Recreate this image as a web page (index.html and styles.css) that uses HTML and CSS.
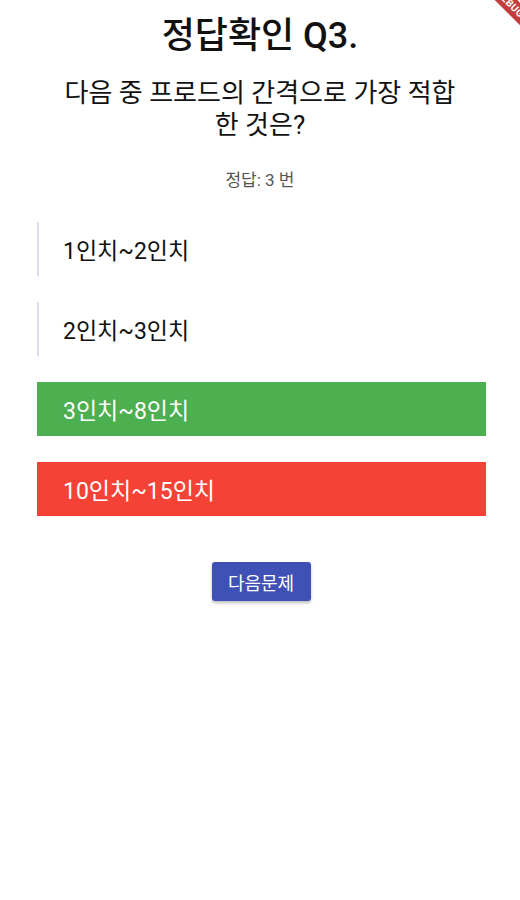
FILE: index.html
```html
<!DOCTYPE html>
<html lang="ko">
<head>
<meta charset="utf-8">
<title>정답확인</title>
<link rel="stylesheet" href="styles.css">
</head>
<body>
<div class="page">
  <h1 class="title">정답확인 Q3.</h1>
  <p class="question">다음 중 프로드의 간격으로 가장 적합<br>한 것은?</p>
  <p class="answer">정답: 3 번</p>
  <div class="options">
    <div class="option plain">1인치~2인치</div>
    <div class="option plain">2인치~3인치</div>
    <div class="option correct">3인치~8인치</div>
    <div class="option wrong">10인치~15인치</div>
  </div>
  <div class="actions">
    <button class="next">다음문제</button>
  </div>
  <div class="debug">DEBUG</div>
</div>
</body>
</html>
```

FILE: styles.css
```css
html, body {
  margin: 0;
  padding: 0;
  background: #fff;
  overflow: hidden;
}
body {
  font-family: Roboto, "Noto Sans CJK KR", sans-serif;
  color: #111;
}
.page {
  position: relative;
  width: 520px;
  height: 900px;
  overflow: hidden;
}
.title {
  margin: 0;
  padding-top: 14px;
  text-align: center;
  font-size: 36px;
  font-weight: 500;
  line-height: 44px;
  color: #111;
}
.question {
  margin: 19px 0 0;
  text-align: center;
  font-size: 26px;
  line-height: 32px;
  font-weight: 400;
  color: #111;
}
.answer {
  margin: 27px 0 0;
  text-align: center;
  font-size: 17px;
  line-height: 24px;
  color: #555;
}
.options {
  margin: 30px 34px 0 37px;
  display: flex;
  flex-direction: column;
  gap: 26px;
}
.option {
  height: 54px;
  display: flex;
  align-items: center;
  padding-left: 26px;
  font-size: 23px;
  color: #111;
  box-sizing: border-box;
}
.option.plain {
  border-left: 2px solid #dcdcec;
  padding-left: 24px;
}
.option.correct {
  background: #4caf50;
  color: #fff;
}
.option.wrong {
  background: #f44336;
  color: #fff;
}
.actions {
  margin-top: 46px;
  display: flex;
  justify-content: center;
}
.next {
  width: 99px;
  height: 39px;
  border: none;
  border-radius: 3px;
  background: #3f51b5;
  color: #fff;
  font-family: Roboto, "Noto Sans CJK KR", sans-serif;
  font-size: 18px;
  box-shadow: 0 2px 3px rgba(0,0,0,0.25);
  padding: 0;
  margin-left: 2px;
}
.debug {
  position: absolute;
  left: 460px;
  top: -4px;
  width: 100px;
  height: 16px;
  line-height: 16px;
  transform: rotate(45deg);
  background: rgba(183, 28, 28, 0.85);
  color: #fff;
  font-size: 10px;
  font-weight: 700;
  text-align: center;
  letter-spacing: 0.5px;
}
```
